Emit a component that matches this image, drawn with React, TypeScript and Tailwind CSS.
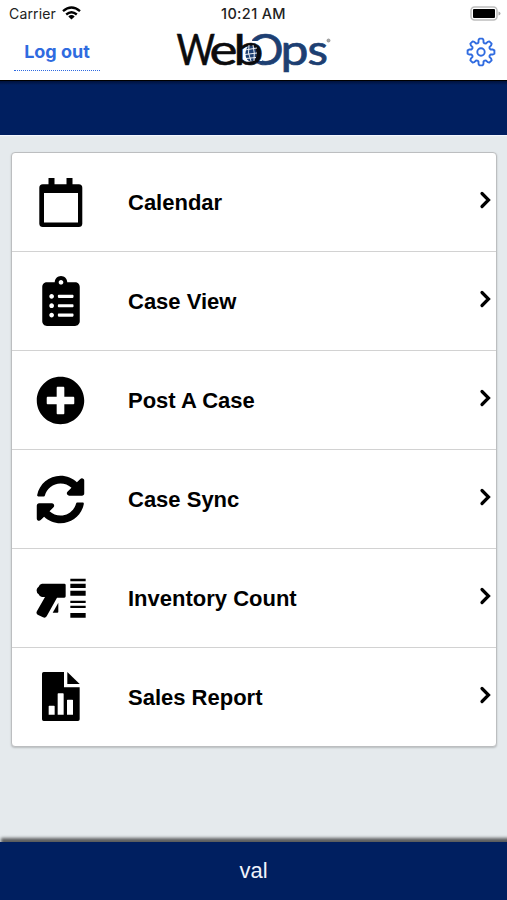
import React from "react";
import { FaClipboardList, FaPlusCircle, FaSyncAlt } from "react-icons/fa";

const CalendarIcon = () => (
  <svg width="50" height="50" viewBox="0 0 50 50">
    <path
      fillRule="evenodd"
      d="M12.5 7.3V1h6v6.3h12V1h6v6.3h6.3a3.5 3.5 0 0 1 3.5 3.5v36a3.5 3.5 0 0 1-3.500 3.200h-36a3.500 3.500 0 0 1-3.500-3.200v-36a3.500 3.500 0 0 1 3.500-3.500zM8 16v29.500h34V16z"
    />
  </svg>
);

const ScannerIcon = () => (
  <svg width="50" height="50" viewBox="48 39 150 150">
    <path d="M66 71H133Q137 71 137 75V109Q137 113 133 113H111L80 169Q76 175 69 172L53 164Q47 160 51 153L75 111H66Q58 109 56 103Q49 99 50 89Q51 83 56 80Q58 72 66 71Z" />
    <path d="M115 128V155Q115 158 112 158H98Z" />
    <path d="M151 56h46v8h-46zM151 71h46v13h-46zM151 92h46v15h-46zM151 122h46v7h-46zM151 137h46v7h-46zM151 159h46v14h-46z" />
  </svg>
);

const ReportIcon = () => (
  <svg width="50" height="50" viewBox="48 38 150 150">
    <path
      fillRule="evenodd"
      d="M71 38H132V84H179V180Q179 185 174 185H71Q66 185 66 180V43Q66 38 71 38ZM88 139Q86 139 86 141V166H104V141Q104 139 102 139ZM115 102Q113 102 113 104V166H131V104Q131 102 129 102ZM143 121Q141 121 141 123V166H159V123Q159 121 157 121Z"
    />
    <path d="M142 38L179 74H142Z" />
  </svg>
);

const menu = [
  { label: "Calendar", icon: <CalendarIcon /> },
  { label: "Case View", icon: <FaClipboardList size={50} /> },
  { label: "Post A Case", icon: <FaPlusCircle size={49} className="-ml-[2px] shrink-0" /> },
  { label: "Case Sync", icon: <FaSyncAlt size={49} className="-ml-[2px] shrink-0" /> },
  { label: "Inventory Count", icon: <ScannerIcon /> },
  { label: "Sales Report", icon: <ReportIcon /> },
];

// 8 rounded teeth, the last point of each group is the valley
const gearPoints = Array.from({ length: 8 })
  .flatMap((_, i) =>
    [
      [-15, 9.8],
      [-11.5, 12.2],
      [-7, 13.5],
      [7, 13.5],
      [11.5, 12.2],
      [15, 9.8],
      [22.5, 9.3],
    ].map(([offset, r]) => {
      const a = ((i * 45 + offset) * Math.PI) / 180;
      return `${(15 + r * Math.sin(a)).toFixed(2)},${(15 - r * Math.cos(a)).toFixed(2)}`;
    })
  )
  .join(" ");

const GearIcon = () => (
  <svg width="30" height="30" viewBox="0 0 30 30" fill="none" stroke="#2f6be0" strokeWidth="1.9" strokeLinejoin="round">
    <polygon points={gearPoints} />
    <circle cx="15" cy="15" r="3.7" />
  </svg>
);

const Logo = () => (
  <svg className="overflow-visible" width="160" height="46" viewBox="175 30 160 46" fontFamily="Lato, sans-serif" fontSize="43">
    <clipPath id="ring">
      <path d="M252 28H290V70H257V60H262V40H252Z" />
    </clipPath>
    <g fill="#1d3f72" stroke="#1d3f72" strokeWidth="0.7">
      <text x="247.500" y="64" textLength="36" lengthAdjust="spacingAndGlyphs" clipPath="url(#ring)">O</text>
      <text x="280.500" y="64" textLength="28" lengthAdjust="spacingAndGlyphs">p</text>
      <text x="307.500" y="64" textLength="20.500" lengthAdjust="spacingAndGlyphs">s</text>
    </g>
    <g fill="#0b0b0d" stroke="#0b0b0d" strokeWidth="0.6">
      <text x="176.500" y="64" textLength="38.500" lengthAdjust="spacingAndGlyphs">W</text>
      <text x="209.500" y="64" textLength="28" lengthAdjust="spacingAndGlyphs">e</text>
      <text x="233.500" y="64" textLength="30" lengthAdjust="spacingAndGlyphs">b</text>
    </g>
    <ellipse cx="251" cy="52.500" rx="5.600" ry="8" fill="#1d3f72" />
    <path d="M245 49l12-2M245 53.500l12-1.500M246 57.500l10-1M249 44q-2 8 2 16M253 44q2 8 1 16" stroke="#fff" strokeWidth="0.9" fill="none" />
    <circle cx="328.500" cy="39.500" r="1.500" fill="#aaa" stroke="#888" strokeWidth="0.8" />
  </svg>
);

const StatusBar = () => (
  <div className="flex h-7 items-center justify-between pl-[9px] pr-[6px] text-[14px] text-[#222]">
    <div className="flex w-40 items-center gap-[6px]">
      <span className="-mt-[2px] tracking-[0.15px]">Carrier</span>
      <svg className="-mt-[2px]" width="19" height="14" viewBox="0 0 19 14" fill="none" stroke="#000" strokeWidth="2.4">
        <path d="M1 5.200Q9.500-2 18 5.200M4.200 8.500Q9.500 4 14.800 8.500" />
        <path d="M9.500 13.500L6.300 10.400Q9.500 7.800 12.700 10.400Z" fill="#000" stroke="none" />
      </svg>
    </div>
    <span className="-ml-[3px] text-[14.5px] font-medium tracking-[0.35px]">10:21 AM</span>
    <div className="flex w-40 justify-end">
      <svg width="31" height="16" viewBox="0 0 31 16">
        <rect x="1" y="1" width="26" height="13" rx="3.500" fill="#fff" stroke="#bdbdbd" strokeWidth="1.500" />
        <rect x="3" y="3" width="22" height="9" rx="1" />
        <path d="M28.500 5.500q2 .5 2 2t-2 2z" fill="#aaa" />
      </svg>
    </div>
  </div>
);

const App = () => {
  return (
    <div className="flex h-[900px] w-[507px] flex-col overflow-hidden bg-[#e5eaed] font-['Inter',sans-serif]">
      <header className="h-20 bg-white">
        <StatusBar />
        <div className="flex justify-between pl-[14px] pr-[11px]">
          <div className="flex w-[86px] flex-col">
            <a className="mt-[9px] h-[34px] border-b border-dotted border-[#2f6be0] text-center text-[18px] leading-[30px] font-bold text-[#2f6be0]">
              Log out
            </a>
          </div>
          <div className="mt-[3px]">
            <Logo />
          </div>
          <div className="flex w-[86px] justify-end pt-[9px]">
            <GearIcon />
          </div>
        </div>
      </header>
      <div className="h-[55px] border-t border-black bg-[#001f60] bg-linear-to-b from-[#00123c] to-[#001f60] to-[4px] shadow-[0_1px_1px_#f4f7ff]" />

      <main className="flex-1 pr-[10px] pl-[11px] pt-[17px] font-['Liberation_Sans',Arial,sans-serif]">
        <ul className="rounded-[4px] border border-[#bcbec0] bg-white shadow-[0_1px_2px_rgba(0,0,0,0.2)]">
          {menu.map(({ label, icon }) => (
            <li key={label} className="flex h-[99px] items-center border-b border-[#d2d2d2] pr-[4px] pl-[24px] last:h-[98px] last:border-b-0">
              <div className="flex w-[50px] justify-center">{icon}</div>
              <span className="ml-[42px] flex-1 text-[22px] font-bold text-black">{label}</span>
              <svg className="-mt-[5px]" width="13" height="18" viewBox="0 0 13 18" fill="none" stroke="#000" strokeWidth="3.2">
                <path d="M3 2.500L9.500 9L3 15.500" strokeLinecap="round" />
              </svg>
            </li>
          ))}
        </ul>
      </main>

      <footer className="flex h-[58px] items-center justify-center bg-[#001f60] pb-[2px] font-['Liberation_Sans',Arial,sans-serif] text-[22px] text-[#f0f3fb] shadow-[2px_-3px_3px_1px_rgba(0,0,0,0.6)]">
        val
      </footer>
    </div>
  );
};

export default App;
